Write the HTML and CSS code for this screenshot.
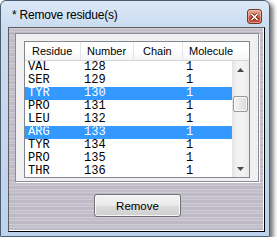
FILE: index.html
```html
<!DOCTYPE html>
<html>
<head>
<meta charset="utf-8">
<link rel="stylesheet" href="styles.css">
</head>
<body>
<div class="window">
  <div class="titlebar">
    <span class="title">* Remove residue(s)</span>
    <div class="close">
      <svg width="9" height="8" viewBox="0 0 9 8"><path d="M1.5 1 L7.5 7 M7.5 1 L1.5 7" stroke="#5a2015" stroke-width="3"/><path d="M1.5 1 L7.5 7 M7.5 1 L1.5 7" stroke="#fff" stroke-width="1.6"/></svg>
    </div>
  </div>
  <div class="client">
    <div class="group">
      <div class="list">
        <div class="header">
          <div class="hcell c1">Residue</div>
          <div class="hcell c2">Number</div>
          <div class="hcell c3">Chain</div>
          <div class="hcell c4">Molecule</div>
        </div>
        <div class="body">
          <div class="rows">
            <div class="row"><span class="c1">VAL</span><span class="c2">128</span><span class="c3"></span><span class="c4">1</span></div>
            <div class="row"><span class="c1">SER</span><span class="c2">129</span><span class="c3"></span><span class="c4">1</span></div>
            <div class="row sel"><span class="c1">TYR</span><span class="c2">130</span><span class="c3"></span><span class="c4">1</span></div>
            <div class="row"><span class="c1">PRO</span><span class="c2">131</span><span class="c3"></span><span class="c4">1</span></div>
            <div class="row"><span class="c1">LEU</span><span class="c2">132</span><span class="c3"></span><span class="c4">1</span></div>
            <div class="row sel focus"><span class="c1">ARG</span><span class="c2">133</span><span class="c3"></span><span class="c4">1</span></div>
            <div class="row"><span class="c1">TYR</span><span class="c2">134</span><span class="c3"></span><span class="c4">1</span></div>
            <div class="row"><span class="c1">PRO</span><span class="c2">135</span><span class="c3"></span><span class="c4">1</span></div>
            <div class="row"><span class="c1">THR</span><span class="c2">136</span><span class="c3"></span><span class="c4">1</span></div>
          </div>
          <div class="scrollbar">
            <div class="arrow up"><svg width="7" height="4" viewBox="0 0 7 4"><path d="M3.5 0 L7 4 L0 4 Z" fill="#4a4a4a"/></svg></div>
            <div class="track">
              <div class="gap1"></div>
              <div class="thumb"></div>
            </div>
            <div class="arrow down"><svg width="7" height="4" viewBox="0 0 7 4"><path d="M0 0 L7 0 L3.5 4 Z" fill="#4a4a4a"/></svg></div>
          </div>
        </div>
      </div>
    </div>
    <div class="actions">
      <button class="btn">Remove</button>
    </div>
  </div>
</div>
</body>
</html>
```
FILE: styles.css
```css
html, body {
  margin: 0;
  padding: 0;
  background: #ffffff;
}
.window {
  box-sizing: border-box;
  width: 270px;
  height: 237px;
  border: 1px solid #4d5d70;
  border-radius: 6px 6px 1px 1px;
  background: linear-gradient(#dbe8f7 0px, #cbdcf1 26px, #bcd2ec 100%);
  box-shadow: 3px 3px 5px rgba(0, 0, 0, 0.6);
  padding: 0 4px 4px 7px;
  display: flex;
  flex-direction: column;
}
.titlebar {
  height: 26px;
  display: flex;
  align-items: flex-start;
  flex: none;
}
.title {
  font-family: "Liberation Sans", Arial, sans-serif;
  font-size: 12px;
  color: #000;
  margin-left: 4px;
  margin-top: 7px;
  line-height: 15px;
  flex: 1;
  letter-spacing: -0.2px;
}
.close {
  box-sizing: border-box;
  width: 15px;
  height: 15px;
  margin-top: 8px;
  margin-right: 3px;
  border: 1px solid #6b3a34;
  border-radius: 3px;
  background: linear-gradient(#eaa795 0%, #d77c63 45%, #c6492c 55%, #c9553a 100%);
  box-shadow: inset 0 0 0 1px rgba(255, 210, 200, 0.5);
  display: flex;
  align-items: center;
  justify-content: center;
}
.client {
  flex: 1;
  box-sizing: border-box;
  border-left: 1px solid #5e5e5e;
  border-top: 1px solid #5e5e5e;
  border-right: 1px solid #000;
  border-bottom: 1px solid #000;
  box-shadow: inset -1px -1px 0 #ffffff;
  background:
    repeating-linear-gradient(180deg,
      rgba(255,255,255,0.12) 0px, rgba(255,255,255,0.12) 1px,
      rgba(0,0,0,0.03) 1px, rgba(0,0,0,0.03) 3px,
      rgba(255,255,255,0.07) 3px, rgba(255,255,255,0.07) 4px,
      rgba(0,0,0,0.06) 4px, rgba(0,0,0,0.06) 7px),
    #c9c5d1;
  display: flex;
  flex-direction: column;
  padding: 5px 5px 0 6px;
}
.group {
  box-sizing: border-box;
  height: 149px;
  border: 1px solid #8c8c94;
  background: #f0f0f0;
  box-shadow: 1px 1px 0 #ffffff;
  padding: 7px 8px 3px 8px;
  display: flex;
}
.list {
  flex: 1;
  border: 1px solid #828790;
  background: #fff;
  display: flex;
  flex-direction: column;
  overflow: hidden;
}
.header {
  height: 18px;
  flex: none;
  display: flex;
  border-bottom: 1px solid #d5d5d5;
  background: linear-gradient(#ffffff 0%, #ffffff 50%, #f3f4f6 100%);
  font-family: "Liberation Sans", Arial, sans-serif;
  font-size: 11px;
  color: #000;
}
.hcell {
  box-sizing: border-box;
  line-height: 18px;
  padding-left: 7px;
  border-right: 1px solid #e3e5e8;
}
.header .c1 { width: 56px; }
.header .c2 { width: 53px; padding-left: 6px; }
.header .c3 { width: 49px; padding-left: 9px; }
.header .c4 { flex: 1; padding-left: 6px; border-right: none; }
.body {
  flex: 1;
  display: flex;
  overflow: hidden;
}
.rows {
  flex: 1;
  overflow: hidden;
}
.row {
  box-sizing: border-box;
  height: 13px;
  display: flex;
  font-family: "Liberation Mono", "Courier New", monospace;
  font-size: 12px;
  line-height: 13px;
  color: #000;
}
.row span {
  box-sizing: border-box;
  padding-left: 3px;
  white-space: nowrap;
}
.row .c1 { width: 56px; }
.row .c2 { width: 53px; }
.row .c3 { width: 49px; }
.row .c4 { flex: 1; }
.row.sel {
  background: #3399ff;
  color: #fff;
}
.row.focus {
  outline: 1px dotted #d08020;
  outline-offset: -1px;
}
.scrollbar {
  width: 17px;
  flex: none;
  display: flex;
  flex-direction: column;
  background: linear-gradient(90deg, #e3e3e3 0%, #f2f2f2 30%, #f2f2f2 70%, #e9e9e9 100%);
}
.arrow {
  height: 17px;
  flex: none;
  display: flex;
  align-items: center;
  justify-content: center;
}
.track {
  flex: 1;
  display: flex;
  flex-direction: column;
}
.gap1 {
  height: 18px;
}
.thumb {
  box-sizing: border-box;
  height: 16px;
  margin: 0 1px;
  border: 1px solid #979797;
  border-radius: 2px;
  background: linear-gradient(90deg, #f3f3f3 0%, #e8e8e8 50%, #d8d8d8 100%);
  box-shadow: inset 0 0 0 1px rgba(255,255,255,0.7);
}
.actions {
  display: flex;
  justify-content: center;
  padding-top: 12px;
  padding-left: 1px;
}
.btn {
  box-sizing: border-box;
  width: 87px;
  height: 23px;
  border: 1px solid #707070;
  border-radius: 3px;
  background: linear-gradient(#f2f2f2 0%, #ebebeb 49%, #dddddd 51%, #cfcfcf 100%);
  box-shadow: inset 0 0 0 1px rgba(255,255,255,0.8);
  font-family: "Liberation Sans", Arial, sans-serif;
  font-size: 11.5px;
  color: #000;
  padding: 0;
  margin: 0;
}
```
